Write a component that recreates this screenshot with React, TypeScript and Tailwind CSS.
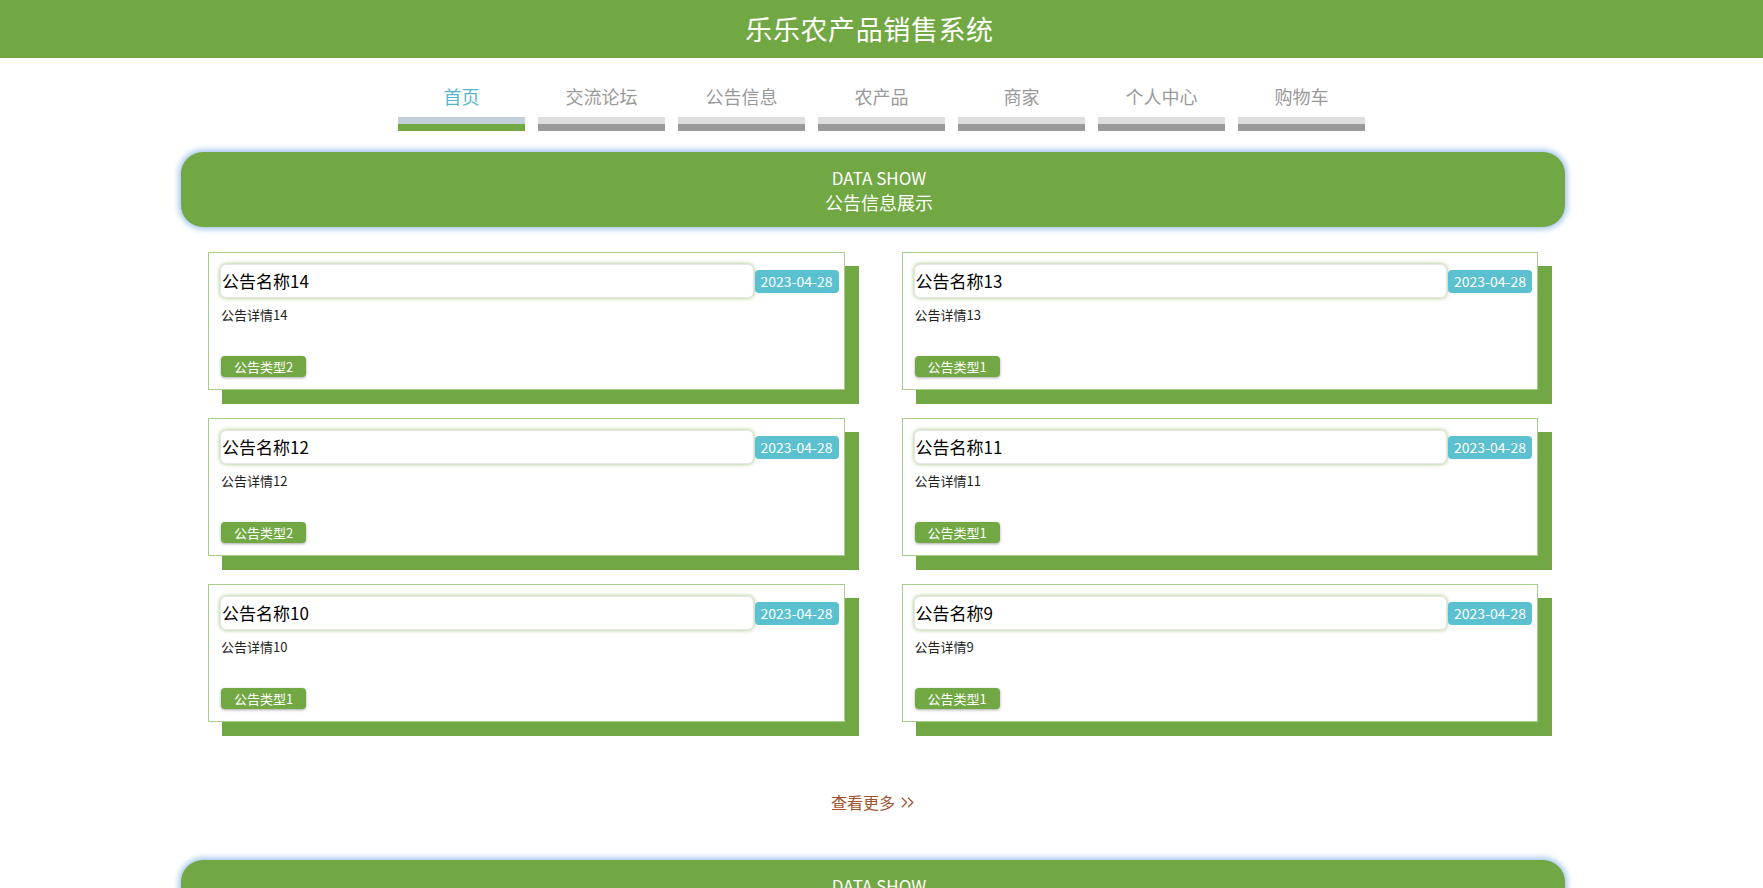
import React from "react";
import { ChevronsRight } from "lucide-react";

const navItems = ["首页", "交流论坛", "公告信息", "农产品", "商家", "个人中心", "购物车"];

const notices = [
  { name: "公告名称14", detail: "公告详情14", type: "公告类型2" },
  { name: "公告名称13", detail: "公告详情13", type: "公告类型1" },
  { name: "公告名称12", detail: "公告详情12", type: "公告类型2" },
  { name: "公告名称11", detail: "公告详情11", type: "公告类型1" },
  { name: "公告名称10", detail: "公告详情10", type: "公告类型1" },
  { name: "公告名称9", detail: "公告详情9", type: "公告类型1" },
];

function Banner() {
  return (
    <div className="ml-[181px] w-[1384px] h-[75px] rounded-[22px] bg-[#72a843] shadow-[0_0_6px_2px_#9cc0ec] flex flex-col items-center justify-center pl-[12px] text-white">
      <div className="text-[17px] leading-[25px]">DATA SHOW</div>
      <div className="text-[18px] leading-[25px]">公告信息展示</div>
    </div>
  );
}

function Card({ n }: { n: { name: string; detail: string; type: string } }) {
  return (
    <div className="h-[138px] border border-[#a9cd8d] bg-white shadow-[14px_14px_0_0_#72a843] pt-[11px] pl-[11px] pr-[5px] flex flex-col items-start">
      <div className="flex items-center w-full">
        <div className="flex-1 h-[34px] rounded-[6px] border border-[#e6e6e6] bg-white shadow-[0_0_4px_rgba(114,168,67,0.7)] flex items-center pl-[1px] text-[17px] text-black">
          {n.name}
        </div>
        <div className="ml-[1px] w-[84px] h-[23px] rounded-[4px] bg-[#5bc0cf] text-white text-[14px] flex items-center justify-center">
          2023-04-28
        </div>
      </div>
      <div className="mt-[8px] ml-[1px] text-[13px] leading-[18px] text-[#222]">{n.detail}</div>
      <div className="mt-[32px] ml-[1px] h-[21px] px-[13px] rounded-[4px] bg-[#72a843] text-white text-[13px] flex items-center shadow-[0_1px_3px_rgba(0,0,0,0.35)]">
        {n.type}
      </div>
    </div>
  );
}

export default function App() {
  return (
    <div
      className="w-[1763px] h-[888px] overflow-hidden bg-white"
      style={{ fontFamily: '"Microsoft YaHei", "Noto Sans CJK SC", "Noto Sans", sans-serif' }}
    >
      <header className="h-[58px] bg-[#72a843] flex items-center justify-center">
        <h1 className="ml-[-24px] text-[27px] tracking-[0.6px] text-white font-normal">乐乐农产品销售系统</h1>
      </header>

      <nav className="pt-[26px] flex justify-center gap-[13px]">
        {navItems.map((item, i) => (
          <div key={item} className="w-[127px] flex flex-col items-center">
            <div className={`text-[18px] leading-[24px] ${i === 0 ? "text-[#55b7c9]" : "text-[#999999]"}`}>{item}</div>
            <div className="mt-[9px] w-full">
              <div className={`h-[7px] ${i === 0 ? "bg-[#c3cfdb]" : "bg-[#dedede]"}`} />
              <div className={`h-[7px] ${i === 0 ? "bg-[#72a843]" : "bg-[#9a9a9a]"}`} />
            </div>
          </div>
        ))}
      </nav>

      <div className="mt-[21px]">
        <Banner />
      </div>

      <div className="mt-[25px] ml-[208px] w-[1330px] grid grid-cols-2 gap-x-[57px] gap-y-[28px]">
        {notices.map((n) => (
          <Card key={n.name} n={n} />
        ))}
      </div>

      <div className="mt-[68px] ml-[-14px] flex justify-center items-center text-[16px] leading-[24px] text-[#a0522d]">
        <span>查看更多</span>
        <ChevronsRight size={21} strokeWidth={1.6} className="ml-[2px]" />
      </div>

      <div className="mt-[46px]">
        <Banner />
      </div>
    </div>
  );
}
